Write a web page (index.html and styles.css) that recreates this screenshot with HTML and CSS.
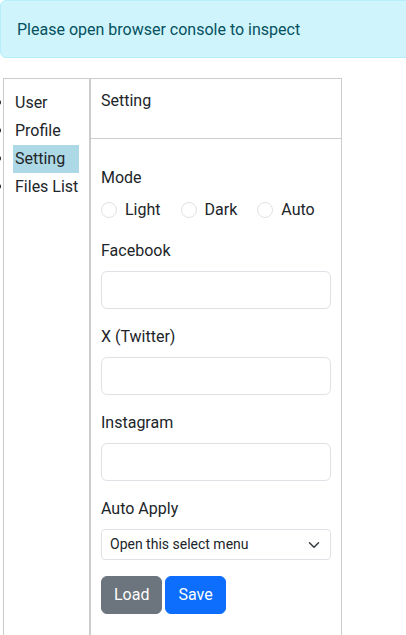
FILE: index.html
```html
<!DOCTYPE html>
<html lang="en">
<head>
<meta charset="utf-8">
<title>Setting</title>
<link rel="stylesheet" href="styles.css">
</head>
<body>
<div class="alert">Please open browser console to inspect</div>
<div class="layout">
  <nav class="side">
    <ul class="menu">
      <li>User</li>
      <li>Profile</li>
      <li class="active">Setting</li>
      <li>Files List</li>
    </ul>
  </nav>
  <section class="panel">
    <div class="panel-head">Setting</div>
    <form class="panel-body">
      <div class="group">
        <div class="label">Mode</div>
        <div class="checks">
          <label class="check"><input type="radio" name="mode" class="radio"><span>Light</span></label>
          <label class="check"><input type="radio" name="mode" class="radio"><span>Dark</span></label>
          <label class="check"><input type="radio" name="mode" class="radio"><span>Auto</span></label>
        </div>
      </div>
      <div class="group">
        <label class="label">Facebook</label>
        <input type="text" class="control">
      </div>
      <div class="group">
        <label class="label">X (Twitter)</label>
        <input type="text" class="control">
      </div>
      <div class="group">
        <label class="label">Instagram</label>
        <input type="text" class="control">
      </div>
      <div class="group">
        <label class="label">Auto Apply</label>
        <div class="select-wrap">
          <select class="select"><option>Open this select menu</option></select>
          <svg class="chev" viewBox="0 0 16 16" width="16" height="12" aria-hidden="true"><path d="m2 5 6 6 6-6" fill="none" stroke="#343a40" stroke-width="2" stroke-linecap="round" stroke-linejoin="round"/></svg>
        </div>
      </div>
      <div class="actions">
        <button type="button" class="btn btn-secondary">Load</button>
        <button type="button" class="btn btn-primary">Save</button>
      </div>
    </form>
  </section>
</div>
</body>
</html>
```

FILE: styles.css
```css
html, body {
  margin: 0;
  padding: 0;
  overflow: hidden;
}
body {
  font-family: Roboto, "Noto Sans", sans-serif;
  font-size: 16px;
  line-height: 24px;
  color: #212529;
  background: #fff;
}
.alert {
  box-sizing: border-box;
  width: calc(100% + 12px);
  padding: 17px 16px 15px;
  background: #cff4fc;
  border: 1px solid #b6effb;
  border-radius: 6px;
  color: #055160;
  margin-bottom: 20px;
}
.layout {
  display: flex;
  margin-left: 3px;
  width: 339px;
}
.side {
  box-sizing: border-box;
  width: 87px;
  border: 1px solid #ccc;
  flex-shrink: 0;
}
.menu {
  margin: 10px 0 0 0;
  padding: 0 10px 0 9px;
}
.menu li {
  padding: 2px 2px;
  line-height: 24px;
  white-space: nowrap;
}
.menu li.active {
  background: #add8e6;
}
.panel {
  flex: 1;
  border: 1px solid #ccc;
  min-width: 0;
}
.panel-head {
  height: 60px;
  box-sizing: border-box;
  padding: 10px 10px 0;
  border-bottom: 1px solid #ccc;
}
.panel-body {
  padding: 27px 10px 24px 10px;
}
.group {
  margin-bottom: 16px;
}
.label {
  display: block;
  margin-bottom: 8px;
}
.checks {
  display: flex;
  padding-bottom: 1px;
}
.check {
  display: flex;
  align-items: center;
  margin-right: 20px;
}
.radio {
  appearance: none;
  -webkit-appearance: none;
  width: 16px;
  height: 16px;
  margin: 0 8px 0 0;
  border: 1px solid #dee2e6;
  border-radius: 50%;
  background: #fff;
}
.control {
  display: block;
  box-sizing: border-box;
  width: 100%;
  height: 38px;
  padding: 6px 12px;
  border: 1px solid #dee2e6;
  border-radius: 6px;
  font: inherit;
  background: #fff;
}
.select-wrap {
  position: relative;
}
.select {
  appearance: none;
  -webkit-appearance: none;
  display: block;
  box-sizing: border-box;
  width: 100%;
  height: 31px;
  padding: 4px 36px 4px 8px;
  border: 1px solid #dee2e6;
  border-radius: 4px;
  font-family: inherit;
  font-size: 14px;
  line-height: 21px;
  color: #212529;
  background: #fff;
}
.chev {
  position: absolute;
  right: 9px;
  top: 10px;
  pointer-events: none;
}
.actions {
  display: flex;
  gap: 3px;
}
.btn {
  font: inherit;
  line-height: 24px;
  padding: 6px 12px;
  border: 1px solid transparent;
  border-radius: 6px;
  color: #fff;
}
.btn-secondary {
  background: #6c757d;
  border-color: #6c757d;
}
.btn-primary {
  background: #0d6efd;
  border-color: #0d6efd;
}
```
